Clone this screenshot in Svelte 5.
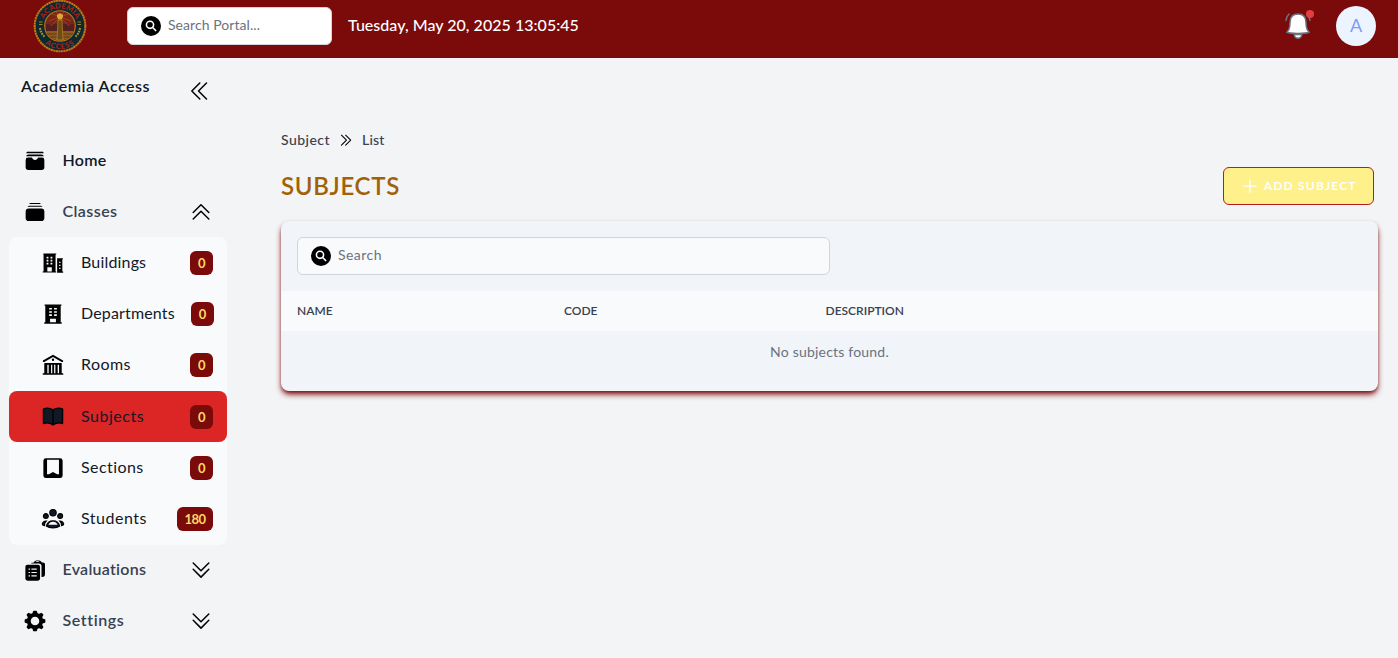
<script>
  const subs = [
    { label: 'Buildings', icon: 'buildings', count: 0 },
    { label: 'Departments', icon: 'department', count: 0 },
    { label: 'Rooms', icon: 'library', count: 0 },
    { label: 'Subjects', icon: 'book', count: 0, active: true },
    { label: 'Sections', icon: 'bookmark', count: 0 },
    { label: 'Students', icon: 'people', count: 180 }
  ];
</script>

{#snippet icon(name, size)}
  <svg class="icon" width={size} height={size} viewBox="0 0 24 24" fill="currentColor" aria-hidden="true">
    {#if name === 'home'}
      <path d="M5 1.800h14a2.500 2.500 0 0 1 2.700 1.700H2.300A2.500 2.500 0 0 1 5 1.800ZM5 5h14a3 3 0 0 1 2.800 1.700H2.200A3 3 0 0 1 5 5Z" />
      <path d="M4.500 8.300h4l1.200 1.600c1 1.400 3.600 1.400 4.600 0l1.200-1.600h4a2.700 2.700 0 0 1 2.700 2.700v7.700a3 3 0 0 1-3 3H4.800a3 3 0 0 1-3-3V11a2.700 2.700 0 0 1 2.700-2.700Z" />
    {:else if name === 'classes'}
      <path d="M7 2.100h10q.8 0 1.300 1.200H5.700Q6.200 2.100 7 2.100ZM5.500 5.100h13q1 0 1.600 1.300H3.900q.6-1.300 1.600-1.300Z" />
      <rect x="1.800" y="8.200" width="20.400" height="13.700" rx="3.400" />
    {:else if name === 'buildings'}
      <path fill-rule="evenodd" d="M1.500 1.500h14v1.300h-.7v18.400h.7v1.300H.7v-1.300h1V2.800h-.200ZM5 5.300v1.800h2V5.300Zm4.300 0v1.800h2V5.300ZM5 8.500v1.800h2V8.500Zm4.300 0v1.800h2V8.500ZM5 11.700v1.800h2v-1.800Zm4.300 0v1.800h2v-1.800ZM5.800 16.500v4.700h4.900v-4.700ZM16.500 6.800h6.300V8h-.6v13.200h.9v1.300h-6.600ZM18.700 10.500v1.500h1.500v-1.500Zm0 3.300v1.500h1.500v-1.500Zm0 3.300v1.500h1.500v-1.500Z" />
    {:else if name === 'department'}
      <path fill-rule="evenodd" d="M2.800 1.500h18.400v1.400h-.8v18.200h1.100v1.400H2.500v-1.400h1.100V2.900h-.8ZM7.800 5.500v1.700h3V5.500Zm5.400 0v1.700h3V5.500ZM7.800 9v1.700h3V9Zm5.400 0v1.700h3V9ZM7.800 12.400v1.700h3v-1.700Zm5.400 0v1.700h3v-1.700ZM8.800 17.300v3.800h6.400v-3.800Z" />
    {:else if name === 'library'}
      <path fill-rule="evenodd" d="M12 .8 23 7v1.800h-1.500L12 3.200 2.500 8.800H1V7Zm0 4.200a1.300 1.300 0 1 1 0 2.600A1.300 1.300 0 0 1 12 5ZM2.500 9.700h19v11.200h1.700v1.800H.8v-1.800h1.700Zm3.300 2.100v9.100h1.500v-9.100Zm4.100 0v9.100h1.300v-9.100Zm3.300 0v9.100h1.400v-9.100Zm3.900 0v9.100h1.500v-9.100Z" />
    {:else if name === 'book'}
      <path fill="#111827" stroke="#000" stroke-width="1.500" stroke-linejoin="round" d="M12 4.300C9 2.300 4.500 2 1.600 3.200v15.900c3.700-1.200 7.400-.6 10.400 1.600 3-2.200 6.700-2.800 10.400-1.600V3.200C19.500 2 15 2.300 12 4.300Zm0 0v16.400" />
    {:else if name === 'bookmark'}
      <path fill-rule="evenodd" d="M4.300 1.300h15.400A2.800 2.800 0 0 1 22.500 4v16a2.800 2.800 0 0 1-2.800 2.800H4.300A2.800 2.800 0 0 1 1.500 20V4a2.800 2.800 0 0 1 2.800-2.700ZM5.500 3v15.800h2L12 16.300l4.500 2.500h2V3Z" />
    {:else if name === 'people'}
      <g stroke="#000" stroke-width="1.200" fill="#111827">
        <circle cx="12" cy="5.100" r="3.500" /><circle cx="4.200" cy="8.800" r="2.700" /><circle cx="19.800" cy="8.800" r="2.700" />
        <path d="M4.700 14.200a6.200 6.200 0 0 0-2 5Q.3 18.900.3 17.100a4.500 4.500 0 0 1 4.400-2.900ZM19.300 14.200a6.200 6.200 0 0 1 2 5q2.400-.3 2.400-2.100a4.500 4.500 0 0 0-4.400-2.900Z" />
        <path d="M4.700 19.700a7.500 7.500 0 0 1 14.600 0q-2.600 2-7.300 2t-7.300-2Z" />
      </g>
      <path fill="#f8fafc" d="M7 18.300a5.500 5.500 0 0 1 10 0Z" />
    {:else if name === 'evaluations'}
      <path fill-rule="evenodd" d="M8 4h2.300a5.400 5.400 0 0 1 9.200-.3h1.400a2 2 0 0 1 2 2v11a3 3 0 0 1-3 3h-.8V8a3 3 0 0 0-3-3H8ZM12.500 3h4.500a3.300 3.300 0 0 0-4.500 0Z" />
      <rect x="1.500" y="6.200" width="16" height="17.500" rx="2.300" />
      <path stroke="#f3f4f6" stroke-width="1.200" d="M5 11h1.600M8.100 11h5.800M5 14.700h1.600M8.100 14.700h5.800M5 18.400h1.600M8.100 18.400h5.800" />
    {:else if name === 'gear'}
      <path fill-rule="evenodd" stroke="#000" stroke-width="1.600" stroke-linejoin="round" d="m10.700 1.500-.8 2.600-2.300 1-2.500-1.200-1.400 1.400 1.300 2.500-.9 2.200-2.600.9v2.200l2.600.9.9 2.200-1.300 2.500 1.400 1.400 2.500-1.200 2.300 1 .8 2.600h2.600l.8-2.600 2.300-1 2.500 1.200 1.400-1.400-1.300-2.500.9-2.200 2.600-.9v-2.200l-2.600-.9-.9-2.200 1.300-2.500-1.400-1.400-2.500 1.200-2.300-1-.8-2.600ZM12 6.500a5.500 5.500 0 1 1 0 11 5.500 5.500 0 0 1 0-11Z" />
    {:else if name === 'search'}
      <circle cx="12" cy="12" r="12" />
      <circle cx="10.800" cy="10.500" r="4.300" fill="none" stroke="#fff" stroke-width="1.900" />
      <path d="m14 13.800 3.600 3.600" fill="none" stroke="#fff" stroke-width="2" stroke-linecap="round" />
    {:else if name === 'left'}
      <path class="line" d="m19.500 4-8 8 8 8M12.800 4l-8 8 8 8" />
    {:else if name === 'right'}
      <path class="line bold" d="m5.200 4.800 7.500 7.500-7.500 7.500M11.500 4.800l7.500 7.500-7.500 7.500" />
    {:else if name === 'up'}
      <path class="line" d="m4.200 12.500 7.800-7.800 7.800 7.800M4.200 19l7.800-7.800 7.800 7.800" />
    {:else if name === 'down'}
      <path class="line" d="m4.200 11.300 7.800 7.800 7.800-7.800M4.200 5l7.800 7.800L19.800 5" />
    {:else if name === 'plus'}
      <path class="line" d="M12 4.500v15M4.500 12h15" />
    {/if}
  </svg>
{/snippet}

<div class="page">
  <header>
    <svg class="logo" width="54" height="54" viewBox="0 0 54 54" role="img" aria-label="Academia Access">
      <defs>
        <path id="arc-top" d="M9.500 27a17.500 17.500 0 0 1 35 0" />
        <path id="arc-bottom" d="M3.900 27a23.100 23.100 0 0 0 46.200 0" />
      </defs>
      <circle cx="27" cy="27" r="25.300" fill="#0e2930" stroke="#c07a14" stroke-width="2" stroke-dasharray="2.200 .4" />
      <circle cx="27" cy="27" r="15.300" fill="#7b2418" stroke="#b87818" stroke-width="1.100" />
      <path stroke="#a8552a" stroke-width=".6" d="M27 18 16 22M27 18l-8-3M27 18l11 4M27 18l8-3M27 18l-4-5M27 18l4-5M27 18l-9 9M27 18l9 9" />
      <path fill="#54201f" d="M13 25h3l2 2 3-2h12l3 2 2-2h3v7H13Z" />
      <path fill="#8f5b1c" d="M13 32h28q-3 9-14 9.500Q16 41 13 32Z" />
      <path stroke="#4a2d18" stroke-width=".7" d="M14 35h26M17 38h20" />
      <path fill="#6b4d1a" stroke="#c99128" stroke-width=".6" d="M25 21h4l1 20h-6Z" />
      <path fill="#e0a52e" d="M24 16q3-3.500 6 0v2l-1.500 2.500h-3L24 18Z" />
      <text class="seal"><textPath href="#arc-top" startOffset="50%" text-anchor="middle">ACADEMIA</textPath></text>
      <text class="seal wide"><textPath href="#arc-bottom" startOffset="50%" text-anchor="middle">ACCESS</textPath></text>
      <path fill="none" stroke="#b08a2a" stroke-width="2.200" stroke-dasharray="1.800 .9" d="M7 29q1 6 5 9M47 29q-1 6-5 9" />
      <path fill="none" stroke="#b08a2a" stroke-width=".9" d="M6 23h3.500M6 25.500h3.500M44.500 23H48M44.500 25.500H48" />
    </svg>
    <div class="field portal">{@render icon('search', 20)}<span class="s-portal">Search Portal...</span></div>
    <div class="clock">Tuesday, May 20, 2025 13:05:45</div>
    <div class="bell">
      <svg width="28" height="30" viewBox="0 0 28 30" aria-hidden="true">
        <path fill="#fff" stroke="#6b7280" stroke-width="1.500" stroke-linejoin="round" d="M10.300 23.500a3.700 3.700 0 0 0 7.400 0ZM14 3c-5.300 0-8 3.500-8 8.500 0 4.500-.7 7.800-3.300 9.800 3.600 1.600 19 1.600 22.600 0-2.600-2-3.300-5.300-3.300-9.800C22 6.500 19.300 3 14 3Z" />
        <path fill="none" stroke="#6b7280" stroke-width="1.500" stroke-linecap="round" d="M2 9.500Q2.500 5.500 5 3M26 9.500Q25.500 5.500 23 3" />
      </svg>
      <span class="dot"></span>
    </div>
    <div class="avatar">A</div>
  </header>

  <div class="body">
    <aside>
      <div class="brand"><span>Academia Access</span>{@render icon('left', 24)}</div>
      <nav>
        <div class="item dark">{@render icon('home', 22)}<span class="s-home">Home</span></div>
        <div class="item">{@render icon('classes', 22)}<span class="s-classes">Classes</span>{@render icon('up', 24)}</div>
        <div class="sub">
          {#each subs as s}
            <div class="row" class:active={s.active}>
              {@render icon(s.icon, 22)}<span class="s-{s.label.toLowerCase()}">{s.label}</span><b>{s.count}</b>
            </div>
          {/each}
        </div>
        <div class="item">{@render icon('evaluations', 22)}<span class="s-evaluations">Evaluations</span>{@render icon('down', 24)}</div>
        <div class="item">{@render icon('gear', 22)}<span class="s-settings">Settings</span>{@render icon('down', 24)}</div>
      </nav>
    </aside>

    <main>
      <div class="crumbs"><span class="s-subject">Subject</span>{@render icon('right', 16)}<span class="s-list">List</span></div>
      <div class="title">
        <h1>SUBJECTS</h1>
        <button>{@render icon('plus', 20)}<span>ADD SUBJECT</span></button>
      </div>
      <section>
        <div class="tools"><div class="field filter">{@render icon('search', 20)}<span class="s-search">Search</span></div></div>
        <div class="head"><span>NAME</span><span>CODE</span><span>DESCRIPTION</span></div>
        <div class="empty">No subjects found.</div>
      </section>
    </main>
  </div>
</div>

<style>
  :global(body) { background: #f3f4f6; }
  * { box-sizing: border-box; }
  .page { height: 658px; overflow: hidden; font-family: Lato, 'Liberation Sans', sans-serif; font-variant-ligatures: none; color: #111827; background: #f3f4f6; }
  .icon { flex: none; color: #000; overflow: visible; }
  .line { fill: none; stroke: currentColor; stroke-width: 1.500; stroke-linecap: round; stroke-linejoin: round; }
  .line.bold { stroke-width: 1.600; }
  header { height: 58px; display: flex; align-items: flex-start; background: #7b0a0a; padding: 0 22px 0 33px; }
  .logo { margin-top: -1px; margin-right: 40px; flex: none; }
  .seal { font: 900 7.400px Lato, sans-serif; fill: #a81f18; letter-spacing: .1px; }
  .seal.wide { letter-spacing: .9px; }
  .field { display: flex; align-items: center; gap: 7px; height: 38px; padding-left: 13px; border: 1px solid #d1d5db; border-radius: 6px; background: #fff; color: #6b7280; font-size: 14px; white-space: nowrap; }
  .field span { padding-bottom: 3px; }
  .portal { width: 205px; margin-top: 7px; }
  .s-portal { letter-spacing: .06px; }
  .s-search { letter-spacing: .45px; }
  .clock { margin: 13px 0 0 16px; font-size: 16px; line-height: 24px; font-weight: 500; letter-spacing: .03px; color: #fff; }
  .bell { position: relative; margin: 11px 24px 0 auto; width: 28px; height: 30px; }
  .dot { position: absolute; right: -2px; top: -1px; width: 8px; height: 8px; border-radius: 50%; background: #e53e3e; }
  .avatar { width: 40px; height: 40px; margin-top: 6px; border-radius: 50%; background: #ebf4ff; color: #7f9cf5; text-align: center; line-height: 39px; font-size: 18px; }
  .body { display: flex; }
  aside { width: 236px; padding: 0 9px; }
  .brand { height: 77px; display: flex; justify-content: space-between; padding: 16px 16px 0 12px; font-size: 16px; line-height: 24px; font-weight: 600; letter-spacing: .54px; }
  .brand :global(.icon) { margin-top: 5px; }
  .item, .row { display: flex; align-items: center; height: 51.200px; font-size: 16px; white-space: nowrap; }
  .item { padding: 0 14px 0 15px; gap: 16.500px; font-weight: 600; color: #374151; }
  .item span, .row span { flex: 1; padding-bottom: 2.800px; }
  .item.dark { color: #111827; }
  .s-home { letter-spacing: .3px; }
  .s-classes { letter-spacing: .43px; }
  .s-buildings { letter-spacing: .17px; }
  .s-departments { letter-spacing: .16px; }
  .s-rooms { letter-spacing: .45px; }
  .s-subjects { letter-spacing: .53px; }
  .s-sections { letter-spacing: .43px; }
  .s-students { letter-spacing: .5px; }
  .s-evaluations { letter-spacing: .26px; }
  .s-settings { letter-spacing: .6px; }
  .sub { background: #f9fafb; border-radius: 8px; }
  .row { padding: 0 14px 0 33px; gap: 16px; border-radius: 8px; }
  .row span { padding-left: 1px; }
  .row.active { background: #dc2626; }
  .row b { min-width: 23px; height: 24px; padding: 0 7.400px; border-radius: 6px; background: #7b0a0a; color: #fcd965; font-size: 13px; letter-spacing: -.5px; line-height: 24px; text-align: center; }
  main { flex: 1; padding: 71px 20px 0 45px; }
  .crumbs { display: flex; align-items: center; gap: 8px; height: 22px; font-size: 14px; font-weight: 500; color: #374151; }
  .crumbs span { padding-bottom: 2px; }
  .s-subject { letter-spacing: .45px; }
  .s-list { letter-spacing: .25px; }
  .title { display: flex; align-items: center; justify-content: space-between; height: 38px; margin: 16px 4px 16px 0; }
  h1 { margin: 0; padding-bottom: 1px; font-size: 24px; line-height: 32px; font-weight: 600; letter-spacing: .7px; color: #a16207; }
  button { display: flex; align-items: center; justify-content: center; gap: 3.500px; width: 151px; height: 38px; padding: 0; border: 1px solid #b91c1c; border-radius: 6px; background: #fef08a; color: #fff; font: 700 12px Lato, sans-serif; letter-spacing: 1.200px; white-space: nowrap; }
  button span { padding-bottom: 2px; }
  button :global(.icon) { color: #fff; }
  section { border-radius: 8px; overflow: hidden; background: #f1f5f9; box-shadow: 0 4px 6px -1px #7b0a0a, 0 2px 4px -2px #7b0a0a; height: 170px; }
  .tools { padding: 16px; height: 70px; }
  .filter { width: 533px; background: #f9fafb; }
  .head { display: grid; grid-template-columns: 267px 261.500px 1fr; align-items: center; height: 40px; padding: 0 16px 2px; background: #f9fafb; font-size: 12px; font-weight: 600; color: #374151; }
  .empty { text-align: center; font-size: 14px; line-height: 20px; padding-top: 11px; letter-spacing: .2px; color: #6b7280; }
</style>
